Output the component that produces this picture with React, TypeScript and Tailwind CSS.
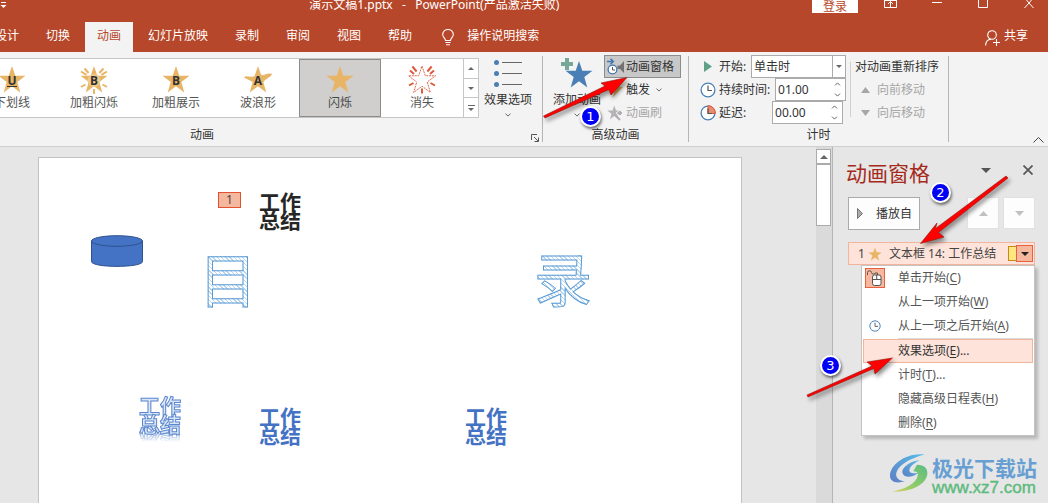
import React from "react";

const STAR = "14,1 17.3,10.7 27.5,10.8 19.3,17 22.3,27.4 14,21.2 5.7,27.4 8.7,17 .5,10.8 10.7,10.7";
const WAVY = "M14 1 L17 9.6 C20 11.6 23 7.2 28 9 C26.5 12.5 22.5 13 19.3 17 L22.3 27.4 L14 21.2 L5.7 27.4 L8.7 17 L0 12.5 C3 9.5 7 13.5 10.7 10.7 Z";

function StarLetter({ letter, underline }: { letter: string; underline?: boolean }) {
  return (
    <>
      <text x="14" y="20" textAnchor="middle" fontSize="12" fontWeight="700" fontFamily="Open Sans" fill="#333">
        {letter}
      </text>
      {underline && <path d="M9 21.500h10" stroke="#333" />}
    </>
  );
}

function GalleryIcon({ kind }: { kind: string }) {
  return (
    <svg className="h-7 w-7 overflow-visible" viewBox="0 0 28 28">
      {kind === "wave" ? (
        <path d={WAVY} fill="#e8b566" />
      ) : kind === "vanish" ? (
        <>
          <polygon points={STAR} fill="#fff" stroke="#dc6b52" strokeWidth="1" strokeDasharray="2 .8" />
          <g stroke="#dc5b3f" strokeWidth="2">
            <path d="M8.6 6.500L4.400 1.500M6 9L2 5.500M19.400 6.500l4.200-5M22 9l4-3.500M5.500 18L1 20.500M22.500 18l4.500 2.500M14 23.500v5" />
          </g>
        </>
      ) : (
        <polygon points={STAR} fill="#e8b566" />
      )}
      {kind === "burst" && (
        <>
          <circle cx="14" cy="15.5" r="6.5" fill="#efcb8c" />
          <g stroke="#e8b566" strokeWidth="2">
            <path d="M8.600 8L4.500 3.500M6.500 9.800L1 6.500M19.400 8l4.100-4.500M21.500 9.800L27 6.500M5.500 19.500L1 22M22.500 19.500L27 22M14 24v5" />
          </g>
        </>
      )}
      {kind === "underline" && <StarLetter letter="U" underline />}
      {(kind === "burst" || kind === "bold") && <StarLetter letter="B" />}
      {kind === "wave" && <StarLetter letter="A" />}
    </svg>
  );
}

function Chevron({ up, className = "h-1 w-[6px]" }: { up?: boolean; className?: string }) {
  return (
    <svg className={className} viewBox="0 0 6 4">
      <path d={up ? "M.5 3.4L3 .9l2.5 2.5" : "M.5 .6L3 3.1 5.500 .6"} fill="none" stroke="#666" />
    </svg>
  );
}

function Triangle({ up, className }: { up?: boolean; className: string }) {
  return (
    <svg className={className} viewBox="0 0 10 5" preserveAspectRatio="none">
      <path d={up ? "M0 5h10L5 0z" : "M0 0h10L5 5z"} fill="currentColor" />
    </svg>
  );
}

function Clock({ className, slice }: { className: string; slice?: boolean }) {
  return (
    <svg className={className} viewBox="0 0 16 16">
      <circle cx="8" cy="8" r="6.900" fill="#fff" stroke="#4a7fb5" strokeWidth="1.300" />
      {slice && <path d="M8 8.500V.6A7.400 7.400 0 0 1 15.300 8.500z" fill="#ea8a6f" stroke="#d8593b" />}
      <path d="M8 3.500V8.500h4" fill="none" stroke="#555" strokeWidth="1.200" />
    </svg>
  );
}

const tabs = ["设计", "切换", "动画", "幻灯片放映", "录制", "审阅", "视图", "帮助"];

function TitleBar() {
  return (
    <div className="flex h-[22px] items-start leading-[10px] text-white">
      <div className="min-w-0 flex-[31_1_0%] pt-[2px]">
        <button aria-label="自定义快速访问工具栏" className="block">
          <svg className="h-2 w-[7px]" viewBox="0 0 7 8">
            <path d="M1 .5h5" stroke="#fff" />
            <path d="M.5 3h6L3.500 6z" fill="#fff" />
          </svg>
        </button>
      </div>
      <h1 className="whitespace-pre">演示文稿1.pptx   -   PowerPoint(产品激活失败)</h1>
      <div className="flex min-w-0 flex-[49_1_0%] items-start justify-end">
        <button className="h-[13px] w-[46px] bg-white text-[#b7472a]">登录</button>
        <button aria-label="功能区显示选项" className="ml-[26px]">
          <svg className="h-2 w-[13px]" viewBox="0 0 13 8">
            <path d="M.5 0v7.500h12V0M6.500 7V1.500M4 4l2.500-2.500L9 4M0 .5h13" fill="none" stroke="#fff" />
          </svg>
        </button>
        <button aria-label="最小化" className="ml-[35px]">
          <svg className="h-2 w-[10px]" viewBox="0 0 10 8"><path d="M0 2.500h10" stroke="#fff" /></svg>
        </button>
        <button aria-label="最大化" className="ml-[36px]">
          <svg className="h-2 w-[10px]" viewBox="0 0 10 8"><path d="M.5 0v7.500h9V0" fill="none" stroke="#fff" /></svg>
        </button>
        <button aria-label="关闭" className="mr-[14px] ml-[36px]">
          <svg className="h-2 w-[10px]" viewBox="0 0 10 8"><path d="M.5 8L5 3l4.500 5M5 3L2.500 0M5 3l2.500-3" fill="none" stroke="#fff" /></svg>
        </button>
      </div>
    </div>
  );
}

function TabRow() {
  return (
    <nav className="flex h-[30px] items-stretch text-white">
      <div className="-ml-[17px] flex gap-[3px]">
        {tabs.map((t) => (
          <button
            key={t}
            className={t === "动画" ? "bg-[#f3f3f3] px-3 pb-[2px] text-[#b7472a]" : "px-3 pb-[2px]"}
          >
            {t}
          </button>
        ))}
      </div>
      <button className="ml-[18px] flex items-center gap-[13px] pb-[2px]">
        <svg className="mt-[3px] h-[17px] w-3" viewBox="0 0 12 17">
          <path d="M3.500 11.500C3.500 9 .7 8.500 .7 5.500a5.300 5 0 0 1 10.600 0c0 3-2.800 3.500-2.800 6zM3.500 13.500h5M4 15.800h4" fill="none" stroke="#fff" strokeWidth="1.100" />
        </svg>
        操作说明搜索
      </button>
      <button className="mr-5 ml-auto flex items-center gap-1 pb-[2px]">
        <svg className="mt-[3px] h-4 w-[15px]" viewBox="0 0 15 16">
          <circle cx="7" cy="5" r="4.300" fill="none" stroke="#fff" strokeWidth="1.100" />
          <path d="M.6 15.500C.8 11.500 3 9.500 6 9.300M8 12.500h7M11.500 9v7" fill="none" stroke="#fff" strokeWidth="1.100" />
        </svg>
        共享
      </button>
    </nav>
  );
}

const effects = [
  { name: "下划线", kind: "underline" },
  { name: "加粗闪烁", kind: "burst" },
  { name: "加粗展示", kind: "bold" },
  { name: "波浪形", kind: "wave" },
  { name: "闪烁", kind: "plain" },
  { name: "消失", kind: "vanish" },
];

function AnimationGroup() {
  return (
    <section className="relative flex flex-col">
      <div className="flex flex-1 items-start pt-[6px] pr-[10px]">
        <div className="-ml-[29px] flex border-y border-[#c6c6c6] bg-white">
          {effects.map((e) => (
            <button
              key={e.name}
              className={
                e.name === "闪烁"
                  ? "flex h-[58px] w-[82px] flex-col items-center border border-[#8c8c8c] bg-[#d0cfce] pt-[5px] text-[#444]"
                  : "flex h-[58px] w-[82px] flex-col items-center border border-transparent pt-[5px] text-[#555]"
              }
            >
              <GalleryIcon kind={e.kind} />
              <span className="pt-[2px] leading-4">{e.name}</span>
            </button>
          ))}
          <div className="flex w-4 flex-col divide-y divide-[#c6c6c6] border-x border-[#c6c6c6] text-[#666]">
            <button aria-label="上一行" className="flex flex-1 items-center justify-center"><Triangle up className="h-[3px] w-[6px]" /></button>
            <button aria-label="下一行" className="flex flex-1 items-center justify-center"><Triangle className="h-[3px] w-[6px]" /></button>
            <button aria-label="其他" className="flex flex-1 flex-col items-center justify-center gap-[2px]">
              <span className="h-px w-[7px] bg-[#666]" />
              <Triangle className="h-[3px] w-[6px]" />
            </button>
          </div>
        </div>
        <button className="ml-[5px] flex flex-col items-center">
          <svg className="h-8 w-7" viewBox="0 0 28 32">
            <g fill="#4a7fb5"><circle cx="2.500" cy="4.500" r="2.500" /><circle cx="2.500" cy="15.500" r="2.500" /><circle cx="2.500" cy="26.500" r="2.500" /></g>
            <path d="M8 4.500h20M8 15.500h20M8 26.500h20" stroke="#666" />
          </svg>
          <span className="pt-[2px] leading-4">效果选项</span>
          <span className="pt-[5px]"><Chevron /></span>
        </button>
      </div>
      <div className="pr-[138px] pb-[3px] text-center leading-4">动画</div>
      <button aria-label="动画设置" className="absolute right-[3px] bottom-1">
        <svg className="h-2 w-2" viewBox="0 0 8 8"><path d="M.5 6V.5H6M3 3l4 4M7.500 3.500v4h-4" fill="none" stroke="#555" /></svg>
      </button>
    </section>
  );
}

function AdvancedGroup() {
  return (
    <section className="flex flex-col">
      <div className="flex flex-1 items-start gap-[3px] pt-[3px] pr-[7px] pl-[10px]">
        <button className="flex flex-col items-center pt-[3px]">
          <svg className="h-8 w-8" viewBox="0 0 32 32">
            <polygon points={STAR} transform="translate(4 2)" fill="#4a7fb5" />
            <path d="M4 0h4v4h4v4H8v4H4V8H0V4h4z" fill="#76a797" />
          </svg>
          <span className="pt-[2px] leading-4">添加动画</span>
          <span className="pt-[5px]"><Chevron /></span>
        </button>
        <div>
          <button className="flex h-[23px] items-center gap-[2px] border border-[#8c8c8c] bg-[#c8c8c8] pr-[6px] pl-[2px]">
            <svg className="h-[17px] w-[17px]" viewBox="0 0 17 17">
              <path d="M0 3.500h6M3.500 .8L6.300 3.500 3.500 6.300" fill="none" stroke="#3f76b0" strokeWidth="1.500" />
              <circle cx="5.500" cy="11.500" r="4.400" fill="#fff" stroke="#3f76b0" strokeWidth="1.300" />
              <path d="M5.500 9v3h2.500" fill="none" stroke="#555" />
              <path d="M17 3v12l-4-4h-2.500V7.500H13z" fill="#737373" />
            </svg>
            动画窗格
          </button>
          <button className="flex h-[23px] items-center gap-[2px] pl-[3px]">
            <svg className="h-4 w-[17px]" viewBox="0 0 17 16"><path d="M9 0h6l-3 5h4L5 16l3.500-8H5z" fill="#e8b566" /></svg>
            触发
            <span className="pl-1"><Chevron /></span>
          </button>
          <button disabled className="flex h-[23px] items-center gap-[2px] pl-[3px] text-[#a6a6a6]">
            <svg className="h-4 w-[17px]" viewBox="0 0 17 16">
              <polygon points={STAR} transform="scale(.52)" fill="#b5b3b5" />
              <path d="M9 8l4-3 3 3-3 3z" fill="#b0aeb0" stroke="#f3f3f3" />
              <path d="M8 10l5 5" stroke="#b0aeb0" strokeWidth="2" />
            </svg>
            动画刷
          </button>
        </div>
      </div>
      <div className="pb-[3px] text-center leading-4">高级动画</div>
    </section>
  );
}

function Spin({ id, value }: { id: string; value: string }) {
  return (
    <div className="flex h-[23px] w-[71px] items-stretch border border-[#ababab] bg-white">
      <input id={id} defaultValue={value} className="w-0 min-w-0 flex-1 bg-transparent pl-[2px] outline-none" />
      <div className="flex w-4 flex-col">
        <button aria-label="增加" className="flex flex-1 items-center justify-center"><Chevron up className="h-1 w-[7px]" /></button>
        <button aria-label="减少" className="flex flex-1 items-center justify-center"><Chevron className="h-1 w-[7px]" /></button>
      </div>
    </div>
  );
}

function TimingGroup() {
  return (
    <section className="flex flex-col">
      <div className="flex flex-1 items-start pt-[3px] pr-[9px] pl-[11px]">
        <div className="w-[146px]">
          <div className="flex h-[23px] items-center">
            <span className="flex w-[19px] pl-1"><svg className="h-[11px] w-2" viewBox="0 0 8 11"><path d="M0 0l8 5.500L0 11z" fill="#5fa088" /></svg></span>
            <label htmlFor="start" className="flex-1">开始:</label>
            <div className="relative w-[95px]">
              <select id="start" className="block h-[23px] w-full appearance-none border border-[#ababab] bg-white pl-[2px] outline-none">
                <option>单击时</option>
              </select>
              <span className="pointer-events-none absolute inset-y-0 right-0 flex w-[14px] items-center justify-center border border-[#ababab] text-[#666]"><Triangle className="h-[3px] w-[6px]" /></span>
            </div>
          </div>
          <div className="flex h-[23px] items-center">
            <span className="w-[19px]"><Clock className="h-4 w-4" /></span>
            <label htmlFor="duration" className="flex-1 whitespace-nowrap">持续时间:</label>
            <Spin id="duration" value="01.00" />
          </div>
          <div className="flex h-[23px] items-center pr-[3px]">
            <span className="w-[19px]"><Clock slice className="h-4 w-4" /></span>
            <label htmlFor="delay" className="flex-1">延迟:</label>
            <Spin id="delay" value="00.00" />
          </div>
        </div>
        <div className="mt-[7px] mr-1 ml-1 h-[55px] w-px bg-[#d0d0d0]" />
        <div className="text-[#a6a6a6]">
          <div className="flex h-[23px] items-center text-[#333]">对动画重新排序</div>
          <button disabled className="flex h-[23px] items-center gap-[7px] pl-[6px]"><Triangle up className="h-[6px] w-[9px]" />向前移动</button>
          <button disabled className="flex h-[23px] items-center gap-[7px] pl-[6px]"><Triangle className="h-[6px] w-[9px]" />向后移动</button>
        </div>
      </div>
      <div className="pb-[3px] text-center leading-4">计时</div>
    </section>
  );
}

function GroupLine() {
  return <div className="mt-1 mb-1 w-px shrink-0 bg-[#b5b5b5]" />;
}

function Ribbon() {
  return (
    <div className="flex h-[95px] items-stretch border-b border-[#cfcfcf] bg-[#f3f3f3] whitespace-nowrap">
      <AnimationGroup />
      <GroupLine />
      <AdvancedGroup />
      <GroupLine />
      <TimingGroup />
      <GroupLine />
      <button aria-label="折叠功能区" className="mt-auto mr-1 mb-[3px] ml-auto">
        <svg className="h-[6px] w-[11px]" viewBox="0 0 11 6"><path d="M.5 5.500l5-5 5 5" fill="none" stroke="#444" /></svg>
      </button>
    </div>
  );
}

function WordArt({ className }: { className: string }) {
  return (
    <div className={"absolute text-[21px] leading-[18px] font-bold " + className}>
      工作<br />总结
    </div>
  );
}

function Slide() {
  const outline =
    "absolute bg-[repeating-linear-gradient(45deg,#b9d6ef_0_1px,#fff_1px_3px)] bg-clip-text leading-[64px] font-normal text-transparent [-webkit-text-stroke:1px_#5b9bd5]";
  return (
    <main className="flex flex-1 pt-[10px] pr-[74px] pl-[38px]">
      <div className="relative flex-1 overflow-hidden border border-b-0 border-[#c3c3c3] bg-white">
        <span className="absolute top-[34px] left-[179px] h-4 w-[23px] border border-[#e0532f] bg-[#f5b79e] text-center leading-[14px] text-[#444]">1</span>
        <WordArt className="top-[35px] left-[220px] text-[#262626]" />
        <svg className="absolute top-[77px] left-[52px] h-8 w-[52px]" viewBox="0 0 52 32">
          <path d="M.5 6v20.500c0 6.500 51 6.500 51 0V6" fill="#4472c4" stroke="#2f528f" />
          <ellipse cx="26" cy="6" rx="25.500" ry="5.300" fill="#4472c4" stroke="#2f528f" />
        </svg>
        <div className={outline + " top-[90px] left-[160px] text-[58px]"}>目</div>
        <div className={outline + " top-[90px] left-[495px] text-[58px]"}>录</div>
        <WordArt className="top-[239px] left-[100px] text-[#dbe5f5] [-webkit-box-reflect:below_0px_linear-gradient(transparent_75%,rgba(0,0,0,.7))] [-webkit-text-stroke:1px_#5b87d0]" />
        <WordArt className="top-[250px] left-[220px] text-[#4472c4]" />
        <WordArt className="top-[250px] left-[426px] text-[#4472c4]" />
      </div>
    </main>
  );
}

function ScrollBar() {
  return (
    <div className="flex w-[17px] shrink-0 flex-col border-r border-[#b5b5b5] bg-[#dadada] pt-[2px] pr-px text-[#666]">
      <button aria-label="向上滚动" className="flex h-[15px] items-center justify-center border border-[#ababab] bg-white"><Triangle up className="h-1 w-2" /></button>
      <div className="h-[62px] border border-[#ababab] bg-white" />
    </div>
  );
}

function MouseIcon() {
  return (
    <svg className="h-4 w-4" viewBox="0 0 16 16">
      <path d="M.5 5V2.500Q.5 .8 2.500 .8T4.500 2.500 6.500 4 8 3M8 3h2.500v2" fill="none" stroke="#555" />
      <rect x="5.500" y="5" width="8.500" height="10.500" rx="2" fill="#fff" stroke="#555" />
      <path d="M5.500 9.500H14M9.700 5v4.500" stroke="#555" />
    </svg>
  );
}

const menu = [
  { text: "单击开始(", key: "C", tail: ")", icon: "mouse" },
  { text: "从上一项开始(", key: "W", tail: ")" },
  { text: "从上一项之后开始(", key: "A", tail: ")", icon: "clock" },
  { text: "效果选项(", key: "E", tail: ")...", active: true },
  { text: "计时(", key: "T", tail: ")..." },
  { text: "隐藏高级日程表(", key: "H", tail: ")" },
  { text: "删除(", key: "R", tail: ")" },
];

function ContextMenu() {
  return (
    <ul className="absolute top-[22px] -right-px left-3 z-10 border border-[#c3c3c3] bg-white px-px text-[#555] shadow-[3px_3px_3px_rgba(0,0,0,.2)]">
      {menu.map((m) => (
        <React.Fragment key={m.key}>
          {m.active && <li className="ml-[35px] h-px bg-[#dcdcdc]" />}
          <li>
            <button
              className={
                m.active
                  ? "flex h-6 w-full items-center border border-[#f2b49d] bg-[#fde3da] text-[#333]"
                  : "flex h-6 w-full items-center border border-transparent"
              }
            >
              <span className="flex w-[34px] shrink-0">
                {m.icon === "mouse" && <span className="ml-px flex h-5 w-5 items-center justify-center border border-[#e8603c] bg-[#f5b79e]"><MouseIcon /></span>}
                {m.icon === "clock" && <Clock className="ml-[5px] h-3 w-3" />}
              </span>
              <span>{m.text}<u className="underline-offset-2">{m.key}</u>{m.tail}</span>
            </button>
          </li>
        </React.Fragment>
      ))}
    </ul>
  );
}

function AnimationPane() {
  return (
    <aside className="w-[215px] shrink-0 pt-3 pr-[13px] pl-[13px]">
      <div className="flex h-7 items-center">
        <h2 className="text-[21px] leading-7 text-[#a52a1c]">动画窗格</h2>
        <button aria-label="窗格选项" className="mb-[6px] ml-auto text-[#555]"><Triangle className="h-[5px] w-[10px]" /></button>
        <button aria-label="关闭窗格" className="mr-[2px] mb-[6px] ml-8">
          <svg className="h-[10px] w-[10px]" viewBox="0 0 10 10"><path d="M.5 .5l9 9M9.500 .5l-9 9" stroke="#555" strokeWidth="1.700" /></svg>
        </button>
      </div>
      <div className="mt-[10px] ml-[2px] flex">
        <button className="flex h-[33px] w-[72px] items-center gap-[13px] border border-[#ababab] bg-[#fdfdfd] pl-2 text-[#333]">
          <svg className="h-[11px] w-[6px]" viewBox="0 0 6 11"><path d="M.5 .5l5 5-5 5z" fill="#aaa" stroke="#777" /></svg>
          播放自
        </button>
        <button aria-label="上移" disabled className="ml-auto flex h-8 w-8 items-center justify-center border border-[#e1e1e1] bg-[#fdfdfd] text-[#c0c0c0]"><Triangle up className="h-[5px] w-[9px]" /></button>
        <button aria-label="下移" disabled className="ml-1 flex h-8 w-8 items-center justify-center border border-[#e1e1e1] bg-[#fdfdfd] text-[#c0c0c0]"><Triangle className="h-[5px] w-[9px]" /></button>
      </div>
      <div className="relative mt-3 ml-[2px] flex h-[23px] items-center border border-[#f2b49d] bg-[#fde3da] pl-[9px] whitespace-nowrap text-[#444]">
        <span className="w-[10px]">1</span>
        <svg className="h-[14px] w-[14px]" viewBox="0 0 28 28"><polygon points={STAR} fill="#e8b566" /></svg>
        <span className="ml-[7px]">文本框 14: 工作总结</span>
        <span className="ml-auto h-[15px] w-2 border border-r-0 border-[#c58a16] bg-[#ffe680]" />
        <button aria-label="动画选项" className="mr-[1px] flex h-[17px] w-[17px] items-center justify-center border border-[#e8603c] bg-[#f5b79e] text-[#222]"><Triangle className="h-1 w-2" /></button>
        <ContextMenu />
      </div>
    </aside>
  );
}

function Watermark() {
  return (
    <div className="absolute right-[11px] bottom-[7px] flex items-start gap-[2px]">
      <svg className="h-10 w-10" viewBox="0 0 43 42">
        <defs>
          <linearGradient id="blue" x1="1" y1="0" x2="0" y2="1"><stop stopColor="#58bde8" /><stop offset="1" stopColor="#5e7fc5" /></linearGradient>
          <linearGradient id="green" x1="1" y1="0" x2="0" y2="1"><stop stopColor="#58bd83" /><stop offset=".7" stopColor="#9bcf63" /><stop offset="1" stopColor="#e3ce65" /></linearGradient>
        </defs>
        <path d="M37 1C17-1 0 12 0 24c0 6 6 9 16 6C6 29 4 22 10 15 16 8 27 4 37 1z" fill="url(#blue)" />
        <path d="M32 7C19 9 11 17 14 22c2 5 12 3 16-1-6 1-10 0-9-4 1-4 6-7 11-10z" fill="url(#blue)" />
        <path d="M29 12c8 0 12 4 11 11C38 34 22 42 3 41c14-3 26-9 27-18 0-3-2-4-5-4z" fill="url(#green)" />
      </svg>
      <div className="font-bold whitespace-nowrap">
        <div className="pt-1 text-[21px] leading-[22px] text-[#689fd3]">极光下载站</div>
        <div className="font-['Liberation_Sans',sans-serif] text-[17px] leading-[17px] font-normal text-[#5cba7d] [-webkit-text-stroke:.4px_#5cba7d]">www.xz7.com</div>
      </div>
    </div>
  );
}

function Badge({ n, className }: { n: string; className: string }) {
  return (
    <span className={"absolute flex h-[21px] w-[21px] items-center justify-center rounded-full border-2 border-white bg-[#0000f5] font-['DejaVu_Sans',sans-serif] text-[13px] leading-4 text-white shadow-[1px_2px_3px_rgba(0,0,0,.55)] " + className}>
      {n}
    </span>
  );
}

function Annotations() {
  return (
    <div className="pointer-events-none absolute inset-0 z-20 overflow-hidden">
      <svg className="absolute top-0 left-0 h-[503px] w-[1048px] drop-shadow-[2px_3px_2px_rgba(0,0,0,.45)]" viewBox="0 0 1048 503">
        <g fill="#f00" stroke="#8c1a10" strokeWidth=".6" strokeLinejoin="round">
          <path d="M543.500 116L605 86 601 83 627 77.500 611 95 609 89.500 545 118z" />
          <path d="M1006 176L935.500 228.500 937 223 920.500 243.500 944 237 938.500 232.500 1008 178z" />
          <path d="M807 395L872 366 867 362 892.500 358 875 374 874 368.500 808 397z" />
        </g>
      </svg>
      <Badge n="1" className="top-[106px] left-[580px]" />
      <Badge n="2" className="top-[182px] left-[930px]" />
      <Badge n="3" className="top-[355px] left-[820px]" />
    </div>
  );
}

export default function App() {
  return (
    <div className="relative flex min-h-screen flex-col overflow-hidden bg-[#e6e6e6] font-['Noto_Sans','Noto_Sans_CJK_SC',sans-serif] text-[12px] leading-4 text-[#333]">
      <header>
        <div className="overflow-hidden bg-[#b7472a]">
          <TitleBar />
          <TabRow />
        </div>
        <Ribbon />
      </header>
      <div className="flex flex-1">
        <Slide />
        <ScrollBar />
        <AnimationPane />
      </div>
      <Watermark />
      <Annotations />
    </div>
  );
}
